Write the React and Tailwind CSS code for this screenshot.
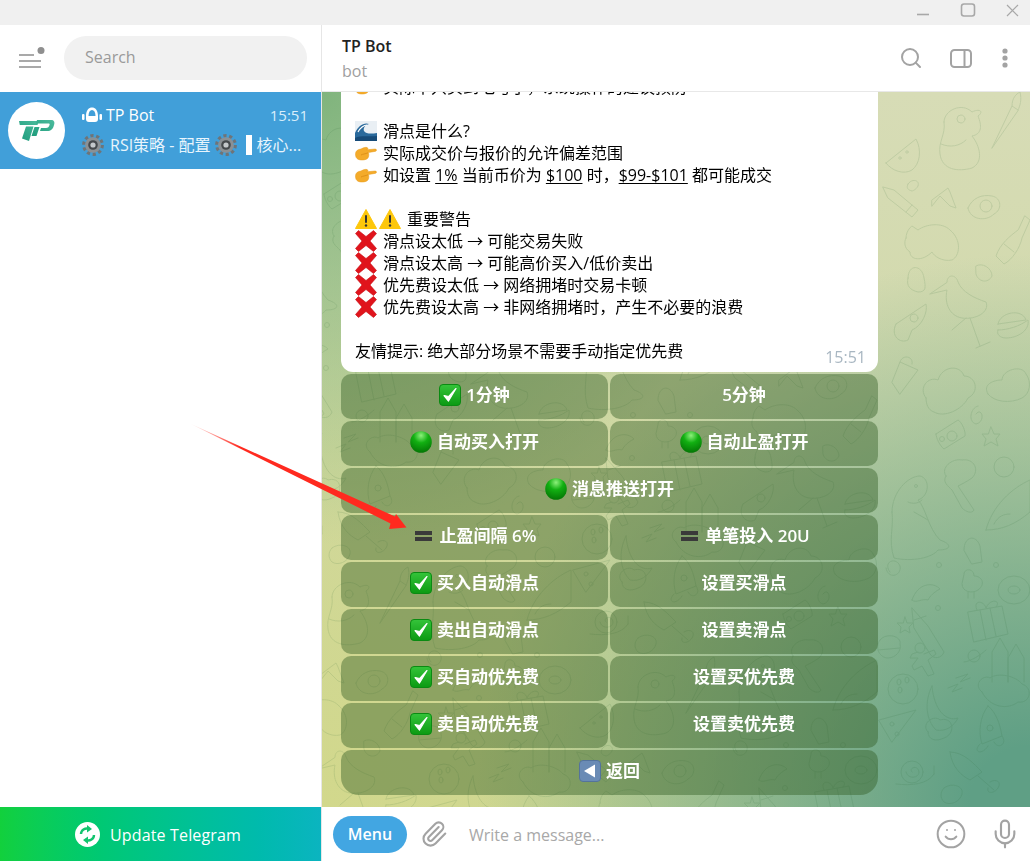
import React from 'react';
import { Search, Paperclip, Smile, Mic } from 'lucide-react';

// emoji are drawn by hand, the sandbox has no colour emoji font
const Emoji = ({ children, size = 22 }) => (
  <svg viewBox="0 0 22 22" width={size} height={size} className="inline-block shrink-0 align-[-5px]">
    {children}
  </svg>
);

const Check = () => (
  <Emoji>
    <defs>
      <linearGradient id="chk" x1="0" y1="0" x2="0" y2="1">
        <stop offset="0" stopColor="#35c43a" />
        <stop offset="1" stopColor="#0b9a12" />
      </linearGradient>
    </defs>
    <rect x="0.5" y="0.5" width="21" height="21" rx="3.5" fill="url(#chk)" stroke="#0b8a12" />
    <path d="M5 11.5 L9.5 17 L17 4.5 L9.8 12.5 Z" fill="#fff" stroke="#fff" strokeWidth="1.2" strokeLinejoin="round" />
  </Emoji>
);

const Dot = () => (
  <Emoji>
    <defs>
      <radialGradient id="dot" cx="0.5" cy="0.2" r="0.85">
        <stop offset="0" stopColor="#8cf07a" />
        <stop offset="0.4" stopColor="#12b012" />
        <stop offset="1" stopColor="#037003" />
      </radialGradient>
    </defs>
    <circle cx="11" cy="11" r="10.8" fill="url(#dot)" />
  </Emoji>
);

const Cross = () => (
  <Emoji>
    <path d="M3.5 0.5 L11 6.5 L18.5 0.5 L21.5 3.5 L15 11 L21.5 18.5 L18.5 21.5 L11 15.5 L3.5 21.5 L0.5 18.5 L7 11 L0.5 3.5 Z" fill="#e0141c" stroke="#c80d14" strokeWidth="0.6" strokeLinejoin="round" />
  </Emoji>
);

const Warn = () => (
  <Emoji>
    <path d="M11 1.5 L21.5 20.5 H0.5 Z" fill="#fdc70c" stroke="#fdc70c" strokeWidth="1" strokeLinejoin="round" />
    <rect x="10" y="7" width="2" height="8" rx="1" fill="#333" />
    <circle cx="11" cy="17.5" r="1.2" fill="#333" />
  </Emoji>
);

const Hand = () => (
  <Emoji>
    <path d="M0.5 12 C0.5 9 2.5 7.5 6 7 C8 6 10 5 12 5.5 C13.5 6 13 7.5 11.5 7.8 L20 7 C22 7 22 9.2 20 9.4 L13.5 10.5 C14 12.5 14 15 12.5 16.5 C10 18.5 4 18.5 2 16.5 C0.8 15.5 0.5 13.5 0.5 12 Z" fill="#f4ab2a" stroke="#e79a1c" strokeWidth="0.5" />
    <path d="M6 13 C8 12 10 12 13 10.8" stroke="#d88a14" strokeWidth="0.8" fill="none" />
  </Emoji>
);

const Wave = () => (
  <Emoji>
    <rect x="0" y="1" width="22" height="20" fill="#e9eff4" />
    <path d="M0 21 V13 C3 6 9 2 14 4 C10 5 8 8 9 11 C11 14 16 14 22 13 V21 Z" fill="#2a6a9c" />
    <path d="M0 21 V18 C6 15 14 17 22 16 V21 Z" fill="#174b78" />
    <path d="M3 12 C5 8 9 5 12 5" stroke="#fff" strokeWidth="1.2" fill="none" />
  </Emoji>
);

const Back = () => (
  <Emoji>
    <rect x="0.5" y="0.5" width="21" height="21" rx="3.5" fill="#6a8bb5" stroke="#54739b" />
    <path d="M5 11 L16 4.5 V17.5 Z" fill="#fff" />
  </Emoji>
);

const Bars = () => (
  <span className="flex w-[22px] flex-col items-center gap-[1.5px]">
    <span className="h-[4.5px] w-[17px] bg-[#3a3a3a]" />
    <span className="h-[4.5px] w-[17px] bg-[#3a3a3a]" />
  </span>
);

const Gear = () => {
  return (
    <Emoji>
      <circle cx="11" cy="11" r="9.3" fill="none" stroke="#6f7478" strokeWidth="3.2" strokeDasharray="3.2 2.64" />
      <circle cx="11" cy="11" r="7.8" fill="#8b9094" />
      <circle cx="11" cy="11" r="4.8" fill="#45494c" />
      <circle cx="11" cy="11" r="2.6" fill="#c4c8cb" />
    </Emoji>
  );
};

// wallpaper doodles: one column traced from the right edge, repeated to the left with <use>
const Wallpaper = () => (
  <svg className="pointer-events-none absolute inset-0 h-full w-full" viewBox="0 0 708 715" preserveAspectRatio="none">
    <defs>
      <g id="sheet" fill="none" stroke="#2f6b3a" strokeWidth="1" strokeLinejoin="round" strokeLinecap="round">
        {/* watermelon */}
        <path d="M564 71 L594 47 C600 58 598 72 590 78 C582 83 570 79 564 71 Z" />
        <circle cx="578" cy="66" r="1.2" />
        <circle cx="585" cy="60" r="1.2" />
        {/* dog */}
        <path d="M622 30 C622 18 640 10 650 20 C658 16 662 20 656 24 C660 34 660 42 650 44 C658 54 662 70 650 76 C636 80 620 78 618 62 C616 50 624 42 622 30 Z M619 52 C628 56 638 54 644 48" />
        <circle cx="639" cy="27" r="4" />
        {/* brush */}
        <path d="M670 56 L690 14 L696 18 Z M690 14 C690 6 694 2 698 0 C700 8 698 14 696 18" />
        {/* pencil */}
        <path d="M561 95 L572 98 L596 118 L590 125 L566 106 Z M590 113 L584 120" />
        {/* heart and plane */}
        <path d="M586 92 C590 86 598 88 596 94 C594 98 590 99 590 99 C586 98 584 96 586 92 Z" />
        <path d="M610 108 L626 96 L628 100 L634 116 L628 114 L618 104 L610 114 Z" />
        {/* egg */}
        <path d="M646 116 C650 106 660 102 670 104 C680 106 680 118 672 122 C664 130 648 128 646 116 Z" />
        <circle cx="664" cy="114" r="6" />
        {/* cat */}
        <path d="M584 146 C584 138 590 134 590 134 L596 138 C604 132 620 130 628 138 C640 148 638 164 630 168 C620 170 612 164 610 160 C600 170 588 168 588 160 C582 156 582 150 584 146 Z" />
        {/* bottle */}
        <path d="M703 124 L708 128 L700 146 C698 156 690 168 682 172 L674 164 C678 152 688 144 696 138 Z M682 152 L692 160" />
        {/* ghost + bee */}
        <path d="M586 186 C586 172 600 172 602 186 C604 196 604 200 596 200 C588 198 584 194 586 186 Z" />
        <path d="M654 174 C660 170 670 176 670 184 C666 192 656 190 654 182 Z" />
        {/* stork */}
        <path d="M625 190 C625 182 634 182 636 190 C640 200 652 206 664 210 C668 220 654 228 640 226 C628 224 622 212 625 198 L608 202 Z M648 226 L658 254 M644 226 L630 238 M654 256 L668 250" />
        {/* mushroom */}
        <path d="M574 232 L604 212 C606 220 600 234 590 238 L586 248 C578 252 568 244 574 232 Z" />
        <circle cx="592" cy="226" r="4" />
        {/* burger */}
        <path d="M676 232 C678 220 700 216 704 228 L676 232 Z M676 238 C686 238 698 234 706 228 C708 238 696 246 684 246 C678 246 674 242 676 238 Z" />
        {/* cake */}
        <path d="M570 290 L578 270 L596 278 L578 302 Z M578 270 C580 262 592 264 590 272" />
        {/* cloud */}
        <path d="M604 306 C596 296 606 284 616 288 C620 274 638 272 642 284 C654 284 658 300 646 306 C640 318 622 326 612 320 C606 318 604 312 604 306 Z" />
        {/* bear */}
        <path d="M666 302 C660 292 672 288 680 288 C680 278 700 272 704 282 C710 290 708 302 700 306 C688 312 672 310 666 302 Z" />
        {/* spiral */}
        <path d="M654 322 C660 314 664 330 654 332 C646 330 648 316 656 314" />
        {/* camera */}
        <path d="M614 342 L636 328 C640 330 644 340 643 344 L622 357 C618 354 614 346 614 342 Z" />
        <circle cx="630" cy="344" r="5" />
        <circle cx="620" cy="347" r="2.5" />
        {/* star */}
        <path d="M669 335 L672 342 L678 342 L674 347 L676 354 L669 350 L662 354 L664 347 L660 342 L666 342 Z" />
        {/* broccoli */}
        <path d="M624 384 C618 376 630 366 640 368 C652 366 658 378 650 386 C644 390 640 392 636 394 L652 418 C650 422 644 420 640 416 L630 398 C626 394 620 390 624 384 Z" />
        {/* ball */}
        <circle cx="682" cy="375" r="10" />
        {/* dino */}
        <path d="M570 420 C570 400 586 384 598 384 C608 386 608 404 596 408 C604 416 606 436 618 448 C630 452 630 458 616 458 C610 466 590 470 572 466 C566 448 572 436 570 420 Z M586 410 C590 412 596 412 600 408 M592 420 L606 428" />
        <circle cx="594" cy="394" r="1.5" />
        {/* surfboard */}
        <path d="M664 438 C670 414 690 396 708 388 V420 C694 432 680 438 664 438 Z M672 432 C676 424 682 422 688 422" />
        {/* popsicle */}
        <path d="M642 458 C642 444 654 442 658 454 L660 470 L650 472 Z" />

        {/* donut */}
        <ellipse cx="692" cy="498" rx="16" ry="14" />
        <ellipse cx="692" cy="498" rx="6" ry="4" />
        {/* gift */}
        <path d="M646 520 L680 514 L686 542 L652 550 Z M658 518 L664 548 M668 516 L674 544 M655 518 C650 508 662 508 664 516 C668 506 680 508 674 515" />
        {/* shrimp */}
        <path d="M590 508 C596 490 612 490 618 497 C612 500 608 504 606 508 C600 506 594 512 590 508 Z" />
        {/* duck */}
        <path d="M642 482 C642 476 652 476 652 484 C660 484 664 492 656 498 C650 502 640 500 640 492 Z M646 500 V506 M652 500 V506" />
        {/* spiral + bits */}
        <path d="M568 480 C560 470 574 464 578 474 C580 484 566 488 564 476" />
        <circle cx="617" cy="473" r="2.5" />
        <circle cx="674" cy="473" r="2.5" />
        <circle cx="616" cy="516" r="2.5" />
        {/* pencil */}
        <path d="M590 516 L606 534 L622 560 C620 566 612 568 608 562 L592 536 Z M592 528 L604 524" />
        {/* star */}
        <path d="M583 525 L585 531 L591 531 L587 535 L588 541 L583 538 L578 541 L579 535 L575 531 L581 531 Z" />
        {/* cupcake */}
        <path d="M558 548 C564 540 580 544 578 552 C580 558 574 566 566 566 C558 566 552 556 558 548 Z M556 558 L578 556" />
        {/* gingerbread */}
        <circle cx="598" cy="556" r="5" />
        <path d="M602 562 L612 558 L614 562 L606 568 L612 582 L606 584 L600 574 L592 578 L590 574 L596 566 L588 566 L590 562 L596 560" />
        {/* planet */}
        <circle cx="652" cy="564" r="6" />
        <path d="M642 570 C648 570 660 562 664 558" />
        {/* castle */}
        <path d="M670 590 V560 L678 546 L686 560 V590 M686 590 V566 L694 552 L702 566 V590 M660 600 C650 592 662 582 668 586 C676 580 694 584 700 592 C712 596 708 612 696 610 C686 618 668 616 660 600 Z" />
        {/* bowling ball */}
        <circle cx="581" cy="597" r="15" />
        <ellipse cx="577" cy="590" rx="2" ry="3" />
        <ellipse cx="585" cy="588" rx="2" ry="3" />
        <ellipse cx="578" cy="598" rx="2" ry="3" />
        {/* moon + zzz */}
        <path d="M610 594 C602 610 604 628 614 638 C624 640 632 634 636 626 C624 630 612 618 610 594 Z M606 640 C598 632 612 622 618 628 C632 624 634 642 622 646 C614 650 606 648 606 640 Z M626 596 L636 592 L630 600 L640 596 M634 586 L646 582 L638 590 L648 586" />
        {/* rocket */}
        <path d="M666 614 C658 624 656 640 660 652 L680 644 C678 632 674 620 666 614 Z M658 652 C650 660 660 664 666 654 M680 644 C686 652 676 658 672 650" />
        <circle cx="668" cy="636" r="3" />
        {/* pizza */}
        <path d="M557 628 L594 618 L570 650 Z" />
        <circle cx="570" cy="632" r="2" />
        <circle cx="575" cy="642" r="2" />
        {/* snail */}
        <circle cx="590" cy="680" r="11" />
        <path d="M590 680 C586 676 596 672 597 680 C597 686 586 688 584 680" />
        <path d="M574 692 C590 694 606 692 612 682 M612 682 L612 674" />
        {/* ice cream */}
        <path d="M628 660 C642 660 652 672 660 680 L648 688 C640 684 630 676 628 660 Z M656 684 L672 698 M668 690 C674 686 680 690 676 696 C672 702 664 702 666 696" />
        {/* strawberry */}
        <path d="M622 696 C630 690 642 694 640 702 C638 710 628 714 622 710 C618 706 618 700 622 696 Z" />
      </g>
    </defs>
    <g opacity="0.13">
      <use href="#sheet" />
      <use href="#sheet" x="-153" y="180" />
      <use href="#sheet" x="-153" y="-535" />
      <use href="#sheet" x="-306" y="-150" />
      <use href="#sheet" x="-306" y="565" />
      <use href="#sheet" x="-459" y="90" />
      <use href="#sheet" x="-459" y="-625" />
      <use href="#sheet" x="-612" y="-240" />
      <use href="#sheet" x="-612" y="475" />
    </g>
  </svg>
);

const keyboard = [
  [{ icon: Check, label: '1分钟' }, { label: '5分钟' }],
  [{ icon: Dot, label: '自动买入打开' }, { icon: Dot, label: '自动止盈打开' }],
  [{ icon: Dot, label: '消息推送打开' }],
  [{ icon: Bars, label: '止盈间隔 6%' }, { icon: Bars, label: '单笔投入 20U' }],
  [{ icon: Check, label: '买入自动滑点' }, { label: '设置买滑点' }],
  [{ icon: Check, label: '卖出自动滑点' }, { label: '设置卖滑点' }],
  [{ icon: Check, label: '买自动优先费' }, { label: '设置买优先费' }],
  [{ icon: Check, label: '卖自动优先费' }, { label: '设置卖优先费' }],
  [{ icon: Back, label: '返回' }],
];

const Line = ({ icon: Icon, children }) => (
  <div className="flex h-[22px] items-center whitespace-pre">
    {Icon && (
      <span className="mr-[6px] flex">
        <Icon />
      </span>
    )}
    <span>{children}</span>
  </div>
);

const App = () => {
  return (
    <div className="relative flex h-[861px] w-[1030px] flex-col overflow-hidden bg-white text-black [font-family:'Open_Sans','Noto_Sans_CJK_SC',sans-serif]">
      {/* TITLE BAR */}
      <div className="flex h-[25px] shrink-0 items-start justify-end bg-[#f0f0f0]">
        <svg width="130" height="25" viewBox="0 0 130 25" fill="none" stroke="#a8a8a8" strokeWidth="1.6">
          <path d="M17 14.5 H29" />
          <rect x="61.5" y="4" width="13" height="12" rx="2.5" />
          <path d="M107 5 L118 16 M118 5 L107 16" strokeWidth="1.2" />
        </svg>
      </div>

      <div className="flex min-h-0 flex-1">
        {/* SIDEBAR */}
        <aside className="flex w-[322px] shrink-0 flex-col border-r border-[#e6e6e6]">
          <div className="flex h-[67px] shrink-0 items-center pb-[2px] pl-[19px] pr-[14px]">
            <svg width="26" height="22" viewBox="0 0 26 22" className="shrink-0">
              <path d="M0 8 H15 M0 14 H22 M0 20 H22" stroke="#a9a9a9" strokeWidth="2" />
              <circle cx="22" cy="3.5" r="3.5" fill="#8f8f8f" />
            </svg>
            <div className="ml-[19px] flex h-[44px] flex-1 items-center rounded-full bg-[#f1f1f1] pb-[2px] pl-[21px] text-base text-[#9a9a9a]">
              Search
            </div>
          </div>

          <div className="flex h-[77px] shrink-0 items-center bg-[#419fd9] pl-2 pr-[13px] text-white">
            <div className="flex h-[57px] w-[57px] shrink-0 items-center justify-center rounded-full bg-white">
              <svg width="36" height="24" viewBox="0 0 36 24">
                <defs>
                  <linearGradient id="logo" x1="0" y1="1" x2="1" y2="0">
                    <stop offset="0" stopColor="#1d9c7c" />
                    <stop offset="1" stopColor="#4cbb9d" />
                  </linearGradient>
                </defs>
                <path d="M0 2 H20 L18.5 6 H0.8 Z M7 7.5 H14.5 L10 22 L3 19.5 Z" fill="url(#logo)" />
                <path d="M18 1 H32 C35 1 36 3 35 6 C34 10 32 12 28 12 H21 L22 9 H27 C29 9 30 8 30.5 6 C31 5 30.5 4.5 29.5 4.5 H17 Z M15.5 8 H20.5 L17.5 17 H12.5 Z" fill="url(#logo)" />
              </svg>
            </div>
            <div className="ml-[17px] min-w-0 flex-1">
              <div className="mt-[-1px] flex h-[24px] items-center">
                <svg width="20" height="16" viewBox="0 0 20 16" fill="#fff" className="shrink-0">
                  <path d="M4 9 C4 3 7 0.5 10 0.5 C13 0.5 16 3 16 9 V12 C16 14 15 15 13 15 H7 C5 15 4 14 4 12 Z M6.5 9 H13.5 C13.5 5 12 3 10 3 C8 3 6.5 5 6.5 9 Z" fillRule="evenodd" />
                  <rect x="0" y="7" width="2.5" height="6" rx="1" />
                  <rect x="17.5" y="7" width="2.5" height="6" rx="1" />
                </svg>
                <span className="ml-[4px] flex-1 text-base font-medium">TP Bot</span>
                <span className="text-[15px] text-[#d8eefb]">15:51</span>
              </div>
              <div className="mt-[6px] flex h-[24px] items-center whitespace-nowrap text-base text-[#e8f5fd]">
                <Gear />
                <span className="ml-[6px]">RSI策略 - 配置</span>
                <span className="ml-[4px] flex"><Gear /></span>
                <span className="ml-[9px] h-[20px] w-[6px] bg-white" />
                <span className="ml-[5px]">核心...</span>
              </div>
            </div>
          </div>

          <div className="flex-1" />

          <div className="flex h-[54px] shrink-0 items-center justify-center gap-[10px] bg-gradient-to-r from-[#12d03c] to-[#0bb4c0] pr-[5px] pt-[1px] text-base font-medium tracking-[0.01em] text-white">
            <svg width="25" height="25" viewBox="0 0 25 25">
              <circle cx="12.5" cy="12.5" r="12.5" fill="#fff" />
              <path d="M6 12 C6 8 10 5.5 14 6.8 M19 13 C19 17 15 19.5 11 18.2" fill="none" stroke="#12c46e" strokeWidth="2.4" />
              <path d="M12 3 L17 7 L12 10.5 Z M13 22 L8 18 L13 14.5 Z" fill="#12c46e" />
            </svg>
            Update Telegram
          </div>
        </aside>

        {/* CHAT */}
        <main className="flex min-w-0 flex-1 flex-col">
          <header className="flex h-[67px] shrink-0 items-center border-b border-[#e8e8e8] pl-5 pr-[22px]">
            <div className="flex-1">
              <div className="text-base font-semibold leading-[22px] text-[#222]">TP Bot</div>
              <div className="mt-[3px] text-base leading-[22px] text-[#a0a0a0]">bot</div>
            </div>
            <Search className="h-[24px] w-[24px] text-[#a3a3a3]" strokeWidth={2} />
            <svg width="22" height="19" viewBox="0 0 22 19" fill="none" stroke="#a3a3a3" strokeWidth="2" className="ml-[27px]">
              <rect x="1" y="1" width="20" height="17" rx="3.5" />
              <path d="M14.5 1 V18" />
            </svg>
            <svg width="6" height="20" viewBox="0 0 6 20" fill="#a3a3a3" className="ml-[30px]">
              <circle cx="3" cy="3" r="2.6" />
              <circle cx="3" cy="10" r="2.6" />
              <circle cx="3" cy="17" r="2.6" />
            </svg>
          </header>

          <div className="relative flex min-h-0 flex-1 flex-col justify-end overflow-hidden bg-[radial-gradient(circle_at_100%_100%,#5f9f85_0%,#5f9f85_6%,#5f9f8500_55%),radial-gradient(circle_at_0%_0%,#80b47d_0%,#80b47d00_45%),radial-gradient(circle_at_0%_100%,#d2d88c_0%,#d2d88c00_60%),linear-gradient(#d7dcb6,#c9d59c)] pb-3 pl-[19px]">
            <Wallpaper />

            <div className="relative w-[537px]">
              {/* MESSAGE */}
              <div className="relative rounded-b-[12px] bg-white pb-[10px] pl-[14px] pr-3 text-base leading-[22px] text-black">
                <Line icon={Hand}>实际不只买到吃亏了，系统操作的建议预防</Line>
                <Line> </Line>
                <Line icon={Wave}>滑点是什么?</Line>
                <Line icon={Hand}>实际成交价与报价的允许偏差范围</Line>
                <Line icon={Hand}>
                  如设置 <span className="underline underline-offset-2">1%</span> 当前币价为{' '}
                  <span className="underline underline-offset-2">$100</span> 时，
                  <span className="underline underline-offset-2">$99-$101</span> 都可能成交
                </Line>
                <Line> </Line>
                <div className="flex h-[22px] items-center whitespace-pre">
                  <span className="mr-[2px] flex"><Warn /></span>
                  <span className="mr-[6px] flex"><Warn /></span>
                  重要警告
                </div>
                <Line icon={Cross}>滑点设太低 → 可能交易失败</Line>
                <Line icon={Cross}>滑点设太高 → 可能高价买入/低价卖出</Line>
                <Line icon={Cross}>优先费设太低 → 网络拥堵时交易卡顿</Line>
                <Line icon={Cross}>优先费设太高 → 非网络拥堵时，产生不必要的浪费</Line>
                <Line> </Line>
                <Line>友情提示: 绝大部分场景不需要手动指定优先费</Line>
                <span className="absolute bottom-[5px] right-3 text-base leading-5 text-[#a9b7c2]">15:51</span>
              </div>

              {/* INLINE KEYBOARD */}
              <div className="mt-0.5 flex flex-col gap-0.5">
                {keyboard.map((row, i) => (
                  <div key={i} className="flex gap-0.5">
                    {row.map((btn, j) => (
                      <div
                        key={btn.label}
                        className={`flex h-[45px] items-center justify-center gap-[5px] bg-[#2f5a22]/[.42] pb-[3px] text-[17px] font-semibold text-white ${
                          row.length === 2 && j === 0 ? 'w-[267px] shrink-0' : 'flex-1'
                        } ${i === keyboard.length - 1 ? 'rounded-b-[18px] rounded-t-[10px]' : 'rounded-[10px]'}`}
                      >
                        {btn.icon && <btn.icon />}
                        <span>{btn.label}</span>
                      </div>
                    ))}
                  </div>
                ))}
              </div>
            </div>
          </div>

          {/* COMPOSER */}
          <footer className="flex h-[54px] shrink-0 items-center pl-[11px] pr-[9px]">
            <div className="flex h-[37px] w-[74px] items-center justify-center rounded-full bg-[#42a6e2] text-base font-semibold text-white">
              Menu
            </div>
            <Paperclip className="ml-[13px] h-[28px] w-[28px] text-[#a3a3a3]" strokeWidth={1.8} />
            <span className="ml-[21px] flex-1 pt-[1px] text-base text-[#a8a8a8]">Write a message...</span>
            <Smile className="h-[32px] w-[32px] text-[#a3a3a3]" strokeWidth={1.5} />
            <Mic className="ml-[22px] h-[32px] w-[32px] text-[#a3a3a3]" strokeWidth={1.6} />
          </footer>
        </main>
      </div>

      {/* red arrow annotation lying over the screenshot */}
      <svg className="pointer-events-none absolute inset-0" width="1030" height="861" viewBox="0 0 1030 861">
        <defs>
          <linearGradient id="arrow" gradientUnits="userSpaceOnUse" x1="192" y1="425" x2="240" y2="447">
            <stop offset="0" stopColor="#ff2a1f" stopOpacity="0.1" />
            <stop offset="1" stopColor="#ff2a1f" />
          </linearGradient>
        </defs>
        <path d="M191 424 L395 516.5 L396 514 L406.5 527.5 L389 529 L390.5 523.5 Z" fill="url(#arrow)" />
      </svg>
    </div>
  );
};

export default App;
